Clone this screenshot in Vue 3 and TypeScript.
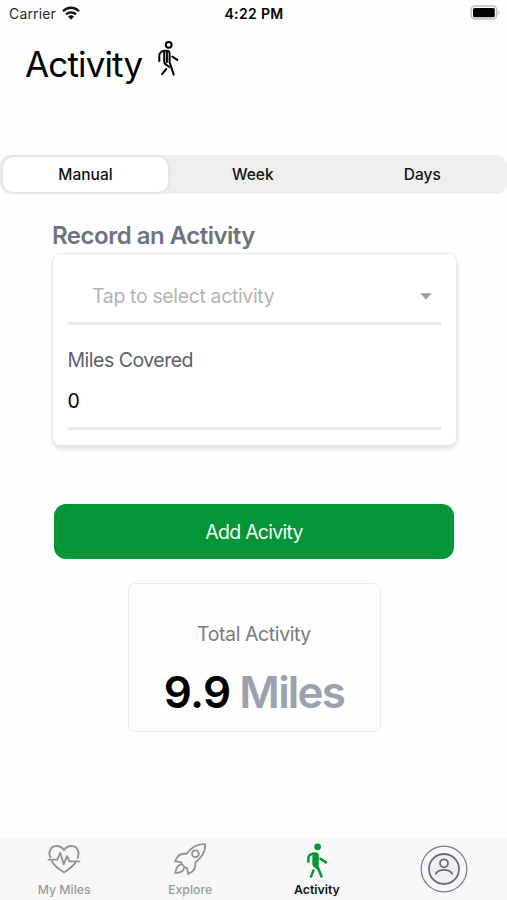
<script setup lang="ts">
import { ref } from 'vue'

const segments: string[] = ['Manual', 'Week', 'Days']
const selected = ref<string>('Manual')
const miles = ref<string>('0')
const total = ref<string>('9.9')
</script>

<template>
  <div class="screen">
    <div class="status">
      <div class="carrier">
        <span class="carrier-name">Carrier</span>
        <svg class="wifi" width="18" height="14" viewBox="0 0 18 14">
          <g fill="none" stroke="#111" stroke-width="2.3">
            <path d="M1 5.2C5.5.6 12.5.6 17 5.2" />
            <path d="M4 8.3C6.8 5.6 11.2 5.6 14 8.3" />
          </g>
          <path d="M6 10.4Q9 8 12 10.4L9 13.7Z" fill="#111" />
        </svg>
      </div>
      <span class="time">4:22 PM</span>
      <svg class="battery" width="31" height="16" viewBox="0 0 31 16">
        <rect x="1.1" y="1.1" width="25.6" height="13" rx="4" fill="#fff" stroke="#bdbdbd" stroke-width="1.5" />
        <rect x="3" y="3" width="21.8" height="9.2" rx="1.5" fill="#000" />
        <path d="M28.3 5.2Q31 7.6 28.3 10Z" fill="#bdbdbd" />
      </svg>
    </div>

    <header class="title">
      <h1>Activity</h1>
      <svg class="walker" width="26" height="40" viewBox="0 0 26 40" fill="none" stroke="#000" stroke-width="2" stroke-linecap="round" stroke-linejoin="round">
        <circle cx="13.7" cy="6.8" r="2.9" />
        <path d="M4.3 23V17.6C4.3 14.8 6.7 12.8 9.5 12.8H11.8C13.8 12.8 14.6 14.2 14.6 16V24.2L18.7 36.6" />
        <path d="M9.2 14V23.6C9.2 25 10 25.9 11.1 26.6L14.2 29M11.9 13.5V24" />
        <path d="M17.3 18.7L22.3 21.9M11.3 31L7 36.2" />
      </svg>
    </header>

    <nav class="segments">
      <button v-for="name in segments" :key="name" :class="['segment', { active: name === selected }]" @click="selected = name">
        <span>{{ name }}</span>
      </button>
    </nav>

    <h2>Record an Activity</h2>

    <section class="card">
      <div class="select">
        <span class="placeholder">Tap to select activity</span>
        <svg width="12" height="7" viewBox="0 0 12 7"><path d="M.3.3H11.7L6 6.6Z" fill="#9b9b9b" /></svg>
      </div>
      <div class="field">
        <label>Miles Covered</label>
        <div class="value">{{ miles }}</div>
      </div>
    </section>

    <button class="add"><span>Add Acivity</span></button>

    <section class="total">
      <div class="total-label">Total Activity</div>
      <div class="total-value"><span class="number">{{ total }}</span><span class="unit">Miles</span></div>
    </section>

    <footer class="tabs">
      <div class="tab miles-tab">
        <svg width="34" height="34" viewBox="0 0 34 34" fill="none" stroke="#929292" stroke-width="1.8" stroke-linecap="round" stroke-linejoin="round">
          <path d="M3.4 16.5C1 11.5 3.3 5.3 9 5C12.8 4.8 15.7 7 17 9.4C18.3 7 21.2 4.8 25 5C30.7 5.3 33 11.5 30.6 17M29.2 20.5C26.3 25 21.5 28.6 17 31.4C12.5 28.6 7.7 25 4.8 20.2" />
          <path d="M1.5 18.6H10.3L13.2 11.7L16.7 23.2L20 15.2L22.3 20.4H32.5" />
        </svg>
        <span class="tab-name">My Miles</span>
      </div>
      <div class="tab">
        <svg width="34" height="34" viewBox="0 0 34 34" fill="none" stroke="#929292" stroke-width="1.8" stroke-linecap="round" stroke-linejoin="round">
          <path d="M32.2 3.3C24.5 2.6 18.5 6.4 13.4 13C9.4 12.2 6.7 13.2 4.7 15.6L2 20.1L8.4 21.4L8.8 23.2L12.2 26.6L14 27L15.2 33L19.4 30.4C21.9 28.3 22.7 25.3 22.2 21.7C28.6 16.7 32.6 11 32.2 3.3Z" />
          <circle cx="22.4" cy="12.7" r="3.4" />
          <path d="M7.6 23.6C4.2 24.4 2.9 26.6 2.2 32.2C7.6 31.8 10.2 30.4 11 27.2" />
        </svg>
        <span class="tab-name">Explore</span>
      </div>
      <div class="tab">
        <svg width="34" height="38" viewBox="0 0 34 38">
          <circle cx="17.6" cy="5.8" r="3.4" fill="#079438" />
          <path d="M12.5 11.5H16.3Q18.7 11.7 18.8 14V23.2L17.2 28.8L13.2 25.2Q12.3 24 12.3 22Z" fill="#079438" />
          <path d="M8.3 20.6V17.5C8.3 14.7 10.6 12.7 14 12.7M20.4 17.7L26 21.4M13.5 29.4L11 35.6M17.5 25.5L21.5 35.5" fill="none" stroke="#079438" stroke-width="2.5" stroke-linecap="round" />
        </svg>
        <span class="tab-name current">Activity</span>
      </div>
      <div class="tab profile">
        <svg width="48" height="48" viewBox="0 0 48 48" fill="none">
          <circle cx="24" cy="24" r="22.8" fill="#f7f7fa" stroke="#777a7e" stroke-width="1.2" />
          <circle cx="24" cy="24" r="15" fill="#eeeff4" stroke="#686d74" stroke-width="1.8" />
          <circle cx="24" cy="18.3" r="4" stroke="#686d74" stroke-width="1.8" />
          <path d="M15.8 28.7C19.2 23.7 28.8 23.7 32.2 28.7" stroke="#686d74" stroke-width="1.8" stroke-linecap="round" />
        </svg>
      </div>
    </footer>
  </div>
</template>

<style>
body {
  margin: 0;
  background: #fff;
}
</style>

<style scoped>
.screen {
  box-sizing: border-box;
  width: 507px;
  height: 900px;
  display: flex;
  flex-direction: column;
  background: #fefefe;
  font-family: Inter, "Liberation Sans", sans-serif;
  color: #000;
  overflow: hidden;
}
button {
  font-family: inherit;
  border: 0;
  padding: 0;
}
.status {
  display: grid;
  grid-template-columns: 1fr auto 1fr;
  align-items: center;
  height: 26px;
  padding: 0 6px 0 9px;
}
.carrier {
  display: flex;
  align-items: center;
  gap: 6px;
  font-size: 14px;
  letter-spacing: 0.15px;
}
.carrier-name {
  color: #2a2a2a;
}
.time {
  font-size: 14px;
  font-weight: 600;
  letter-spacing: 0.35px;
  margin-right: 2px;
}
.battery {
  justify-self: end;
}
.title {
  display: flex;
  height: 74px;
  padding-left: 25px;
  gap: 13px;
}
h1 {
  margin: 16px 0 0;
  font-size: 35px;
  line-height: 44px;
  font-weight: 400;
  letter-spacing: -0.85px;
}
.walker {
  margin-top: 12px;
}
.segments {
  display: flex;
  box-sizing: border-box;
  height: 39px;
  margin-top: 55px;
  padding: 2px 0 2px 3px;
  border-radius: 11px;
  background: #efefef;
}
.segment {
  flex: 1;
  background: transparent;
  border-radius: 10px;
  font-size: 15.5px;
  font-weight: 500;
  color: #111;
}
.segment.active {
  flex: 0 0 165px;
  background: #fff;
  box-shadow: 0 0 4px rgba(0, 0, 0, 0.13);
}
h2 {
  margin: 26px 0 0 52px;
  height: 33px;
  line-height: 32px;
  font-size: 24px;
  font-weight: 600;
  letter-spacing: -0.5px;
  color: #6e7280;
}
.card {
  box-sizing: border-box;
  width: 405px;
  height: 193px;
  margin: 0 0 0 51.5px;
  padding: 0 15px;
  border: 1px solid #e6e8eb;
  border-radius: 9px;
  background: #fff;
  box-shadow: 0 3px 5px rgba(0, 0, 0, 0.13);
}
.select {
  display: flex;
  align-items: center;
  justify-content: space-between;
  box-sizing: border-box;
  height: 71px;
  padding: 16px 9px 0 24.5px;
  border-bottom: 3px solid #e8e8e8;
  font-size: 19.5px;
  letter-spacing: -0.36px;
  color: #b3b3b3;
}
.field {
  height: 102px;
  border-bottom: 3px solid #e8e8e8;
}
label {
  display: block;
  padding-top: 20px;
  font-size: 19.5px;
  line-height: 30px;
  letter-spacing: -0.5px;
  color: #5b616b;
}
.value {
  margin-top: 12px;
  font-size: 19.5px;
  line-height: 28px;
}
.add {
  width: 400px;
  height: 55px;
  margin: 58px 0 0 54px;
  flex-shrink: 0;
  border-radius: 12px;
  background: #049536;
  color: #f3fff6;
  font-size: 19.5px;
  letter-spacing: -0.75px;
}
.total {
  box-sizing: border-box;
  width: 253px;
  height: 149px;
  margin: 24px 0 0 127.5px;
  flex-shrink: 0;
  padding-top: 35px;
  border: 1.5px solid #ebebeb;
  border-radius: 7px;
  text-align: center;
}
.total-label {
  font-size: 19.5px;
  line-height: 30px;
  letter-spacing: -0.4px;
  color: #777a82;
}
.total-value {
  display: flex;
  justify-content: center;
  gap: 9px;
  margin-top: 16px;
  font-size: 44px;
  line-height: 55px;
  font-weight: 600;
}
.number {
  letter-spacing: -0.7px;
}
.unit {
  color: #9ca1ae;
  letter-spacing: -1.8px;
}
.tabs {
  display: grid;
  grid-template-columns: repeat(4, 1fr);
  height: 62px;
  margin-top: auto;
  flex-shrink: 0;
  background: #f7f7f7;
}
.tab {
  display: flex;
  flex-direction: column;
  align-items: center;
  justify-content: space-between;
  box-sizing: border-box;
  padding: 3px 0 2px;
}
.miles-tab {
  padding-left: 1.5px;
}
.tab-name {
  font-size: 12.3px;
  line-height: 16px;
  font-weight: 500;
  color: #999;
}
.tab-name.current {
  color: #111;
  font-weight: 600;
}
.profile {
  justify-content: center;
  padding: 2px 0;
}
</style>
